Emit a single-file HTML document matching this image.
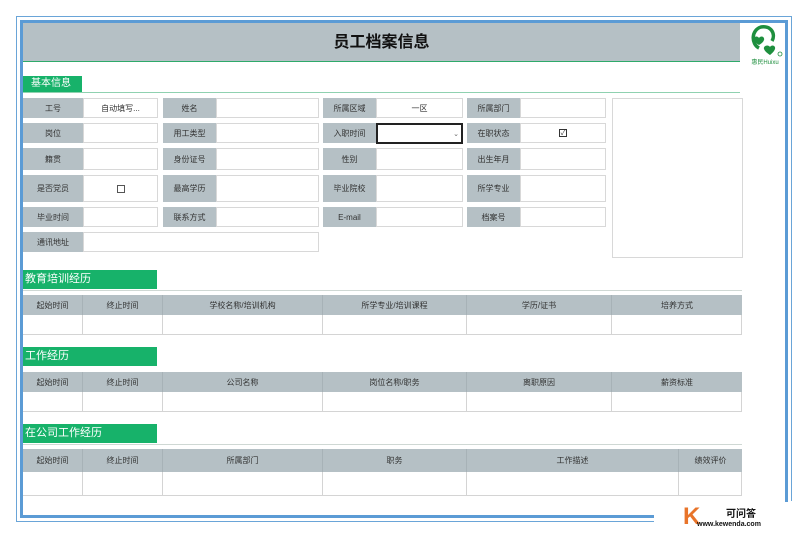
<!DOCTYPE html>
<html><head><meta charset="utf-8"><style>
*{margin:0;padding:0;box-sizing:border-box}
body{width:808px;height:539px;background:#fff;position:relative;overflow:hidden;font-family:"Liberation Sans","Noto Sans CJK SC",sans-serif;}
div{position:absolute}
.l{background:#b5c0c5;font-size:8px;color:#333;display:flex;align-items:center;justify-content:center}
.v{border:1px solid #d8d8d8;background:#fff;font-size:8px;color:#333;display:flex;align-items:center;justify-content:center}
.g{background:#17b26a;color:#fff;font-size:11px;line-height:19px;padding-left:2px}
.h{background:#b5c0c5;font-size:8px;color:#333;display:flex;align-items:center;justify-content:center;border-right:1px solid #a7b2b7}
.c{border-right:1px solid #d4d4d4;border-bottom:1px solid #d4d4d4;background:#fff}
.ln{height:1px;background:#cfd8d4}
</style></head><body>
<!-- frame -->
<div style="left:16px;top:16px;width:776px;height:1px;background:#6aa5d8"></div>
<div style="left:16px;top:16px;width:1px;height:506px;background:#6aa5d8"></div>
<div style="left:16px;top:521px;width:638px;height:1px;background:#6aa5d8"></div>
<div style="left:791px;top:16px;width:1px;height:485px;background:#6aa5d8"></div>
<div style="left:20px;top:20px;width:768px;height:3px;background:#5b9bd5"></div>
<div style="left:20px;top:20px;width:3px;height:498px;background:#5b9bd5"></div>
<div style="left:20px;top:515px;width:634px;height:3px;background:#5b9bd5"></div>
<div style="left:785px;top:20px;width:3px;height:482px;background:#5b9bd5"></div>
<!-- header -->
<div style="left:23px;top:23px;width:717px;height:39px;background:#b5c0c5;border-bottom:1px solid #2eaa6a;font-weight:bold;font-size:16px;text-align:center;line-height:40px;color:#111">员工档案信息</div>
<!-- logo -->
<svg style="position:absolute;left:745px;top:22px" width="40" height="44" viewBox="0 0 40 44">
<path d="M14 26 C6 22 6 8 16 5 C26 3 31 12 27 19" fill="none" stroke="#1e8f3e" stroke-width="3.5"/>
<path d="M14 16 c2-3 6-1 5 2 c-1 3-5 5-5 5 c0 0-4-2-5-5 c-1-3 3-5 5-2z" fill="#1e8f3e"/>
<path d="M25 25 c2-3 6-1 5 2 c-1 3-5 6-5 6 c0 0-5-3-6-6 c-1-3 4-5 6-2z" fill="#1e8f3e"/>
<circle cx="35" cy="32" r="2" fill="none" stroke="#1e8f3e" stroke-width="0.8"/>
<text x="20" y="42" font-size="6" fill="#1e8f3e" text-anchor="middle" font-family="Liberation Sans,Noto Sans CJK SC,sans-serif">惠民Huixu</text>
</svg>
<!-- basic info -->
<div class="g" style="left:23px;top:76px;width:59px;height:16px;line-height:16px;padding-left:8px;font-size:10px">基本信息</div>
<div class="ln" style="left:23px;top:92px;width:717px;background:#8fd1b0"></div>

<div class="l" style="left:23px;top:98px;width:60px;height:20px">工号</div>
<div class="v" style="left:83px;top:98px;width:75px;height:20px">自动填写...</div>
<div class="l" style="left:163px;top:98px;width:53px;height:20px">姓名</div>
<div class="v" style="left:216px;top:98px;width:103px;height:20px"></div>
<div class="l" style="left:323px;top:98px;width:53px;height:20px">所属区域</div>
<div class="v" style="left:376px;top:98px;width:87px;height:20px">一区</div>
<div class="l" style="left:467px;top:98px;width:53px;height:20px">所属部门</div>
<div class="v" style="left:520px;top:98px;width:86px;height:20px"></div>
<div class="v" style="left:612px;top:98px;width:131px;height:160px"></div>

<div class="l" style="left:23px;top:123px;width:60px;height:20px">岗位</div>
<div class="v" style="left:83px;top:123px;width:75px;height:20px"></div>
<div class="l" style="left:163px;top:123px;width:53px;height:20px">用工类型</div>
<div class="v" style="left:216px;top:123px;width:103px;height:20px"></div>
<div class="l" style="left:323px;top:123px;width:53px;height:20px">入职时间</div>
<div class="v" style="left:376px;top:123px;width:87px;height:21px;border:2px solid #222;justify-content:flex-end;padding-right:2px;font-size:7px;color:#666">⌄</div>
<div class="l" style="left:467px;top:123px;width:53px;height:20px">在职状态</div>
<div class="v" style="left:520px;top:123px;width:86px;height:20px"><span style="display:inline-block;width:8px;height:8px;border:1px solid #333;font-size:7px;line-height:7px;text-align:center">✓</span></div>

<div class="l" style="left:23px;top:148px;width:60px;height:22px">籍贯</div>
<div class="v" style="left:83px;top:148px;width:75px;height:22px"></div>
<div class="l" style="left:163px;top:148px;width:53px;height:22px">身份证号</div>
<div class="v" style="left:216px;top:148px;width:103px;height:22px"></div>
<div class="l" style="left:323px;top:148px;width:53px;height:22px">性别</div>
<div class="v" style="left:376px;top:148px;width:87px;height:22px"></div>
<div class="l" style="left:467px;top:148px;width:53px;height:22px">出生年月</div>
<div class="v" style="left:520px;top:148px;width:86px;height:22px"></div>

<div class="l" style="left:23px;top:175px;width:60px;height:27px">是否党员</div>
<div class="v" style="left:83px;top:175px;width:75px;height:27px"><span style="display:inline-block;width:8px;height:8px;border:1px solid #555"></span></div>
<div class="l" style="left:163px;top:175px;width:53px;height:27px">最高学历</div>
<div class="v" style="left:216px;top:175px;width:103px;height:27px"></div>
<div class="l" style="left:323px;top:175px;width:53px;height:27px">毕业院校</div>
<div class="v" style="left:376px;top:175px;width:87px;height:27px"></div>
<div class="l" style="left:467px;top:175px;width:53px;height:27px">所学专业</div>
<div class="v" style="left:520px;top:175px;width:86px;height:27px"></div>

<div class="l" style="left:23px;top:207px;width:60px;height:20px">毕业时间</div>
<div class="v" style="left:83px;top:207px;width:75px;height:20px"></div>
<div class="l" style="left:163px;top:207px;width:53px;height:20px">联系方式</div>
<div class="v" style="left:216px;top:207px;width:103px;height:20px"></div>
<div class="l" style="left:323px;top:207px;width:53px;height:20px">E-mail</div>
<div class="v" style="left:376px;top:207px;width:87px;height:20px"></div>
<div class="l" style="left:467px;top:207px;width:53px;height:20px">档案号</div>
<div class="v" style="left:520px;top:207px;width:86px;height:20px"></div>

<div class="l" style="left:23px;top:232px;width:60px;height:20px">通讯地址</div>
<div class="v" style="left:83px;top:232px;width:236px;height:20px"></div>

<!-- edu -->
<div class="g" style="left:23px;top:270px;width:134px;height:19px">教育培训经历</div>
<div class="ln" style="left:23px;top:290px;width:719px"></div>
<div class="h" style="left:23px;top:295px;width:60px;height:20px">起始时间</div>
<div class="h" style="left:83px;top:295px;width:80px;height:20px">终止时间</div>
<div class="h" style="left:163px;top:295px;width:160px;height:20px">学校名称/培训机构</div>
<div class="h" style="left:323px;top:295px;width:144px;height:20px">所学专业/培训课程</div>
<div class="h" style="left:467px;top:295px;width:145px;height:20px">学历/证书</div>
<div class="h" style="left:612px;top:295px;width:130px;height:20px;border-right:0">培养方式</div>
<div class="c" style="left:23px;top:315px;width:60px;height:20px"></div>
<div class="c" style="left:83px;top:315px;width:80px;height:20px"></div>
<div class="c" style="left:163px;top:315px;width:160px;height:20px"></div>
<div class="c" style="left:323px;top:315px;width:144px;height:20px"></div>
<div class="c" style="left:467px;top:315px;width:145px;height:20px"></div>
<div class="c" style="left:612px;top:315px;width:130px;height:20px"></div>

<!-- work -->
<div class="g" style="left:23px;top:347px;width:134px;height:19px">工作经历</div>
<div class="h" style="left:23px;top:372px;width:60px;height:20px">起始时间</div>
<div class="h" style="left:83px;top:372px;width:80px;height:20px">终止时间</div>
<div class="h" style="left:163px;top:372px;width:160px;height:20px">公司名称</div>
<div class="h" style="left:323px;top:372px;width:144px;height:20px">岗位名称/职务</div>
<div class="h" style="left:467px;top:372px;width:145px;height:20px">离职原因</div>
<div class="h" style="left:612px;top:372px;width:130px;height:20px;border-right:0">薪资标准</div>
<div class="c" style="left:23px;top:392px;width:60px;height:20px"></div>
<div class="c" style="left:83px;top:392px;width:80px;height:20px"></div>
<div class="c" style="left:163px;top:392px;width:160px;height:20px"></div>
<div class="c" style="left:323px;top:392px;width:144px;height:20px"></div>
<div class="c" style="left:467px;top:392px;width:145px;height:20px"></div>
<div class="c" style="left:612px;top:392px;width:130px;height:20px"></div>

<!-- company -->
<div class="g" style="left:23px;top:424px;width:134px;height:19px">在公司工作经历</div>
<div class="ln" style="left:23px;top:444px;width:719px"></div>
<div class="h" style="left:23px;top:449px;width:60px;height:23px">起始时间</div>
<div class="h" style="left:83px;top:449px;width:80px;height:23px">终止时间</div>
<div class="h" style="left:163px;top:449px;width:160px;height:23px">所属部门</div>
<div class="h" style="left:323px;top:449px;width:144px;height:23px">职务</div>
<div class="h" style="left:467px;top:449px;width:212px;height:23px">工作描述</div>
<div class="h" style="left:679px;top:449px;width:63px;height:23px;border-right:0">绩效评价</div>
<div class="c" style="left:23px;top:472px;width:60px;height:24px"></div>
<div class="c" style="left:83px;top:472px;width:80px;height:24px"></div>
<div class="c" style="left:163px;top:472px;width:160px;height:24px"></div>
<div class="c" style="left:323px;top:472px;width:144px;height:24px"></div>
<div class="c" style="left:467px;top:472px;width:212px;height:24px"></div>
<div class="c" style="left:679px;top:472px;width:63px;height:24px"></div>

<!-- watermark -->
<div style="left:683px;top:506px;font-size:24px;font-weight:bold;color:#e8742a;line-height:22px;font-family:'Liberation Sans',sans-serif">K</div>
<div style="left:726px;top:509px;font-size:10px;font-weight:bold;color:#111;line-height:11px">可问答</div>
<div style="left:697px;top:521px;font-size:7px;font-weight:bold;color:#111;line-height:8px">www.kewenda.com</div>
</body></html>
